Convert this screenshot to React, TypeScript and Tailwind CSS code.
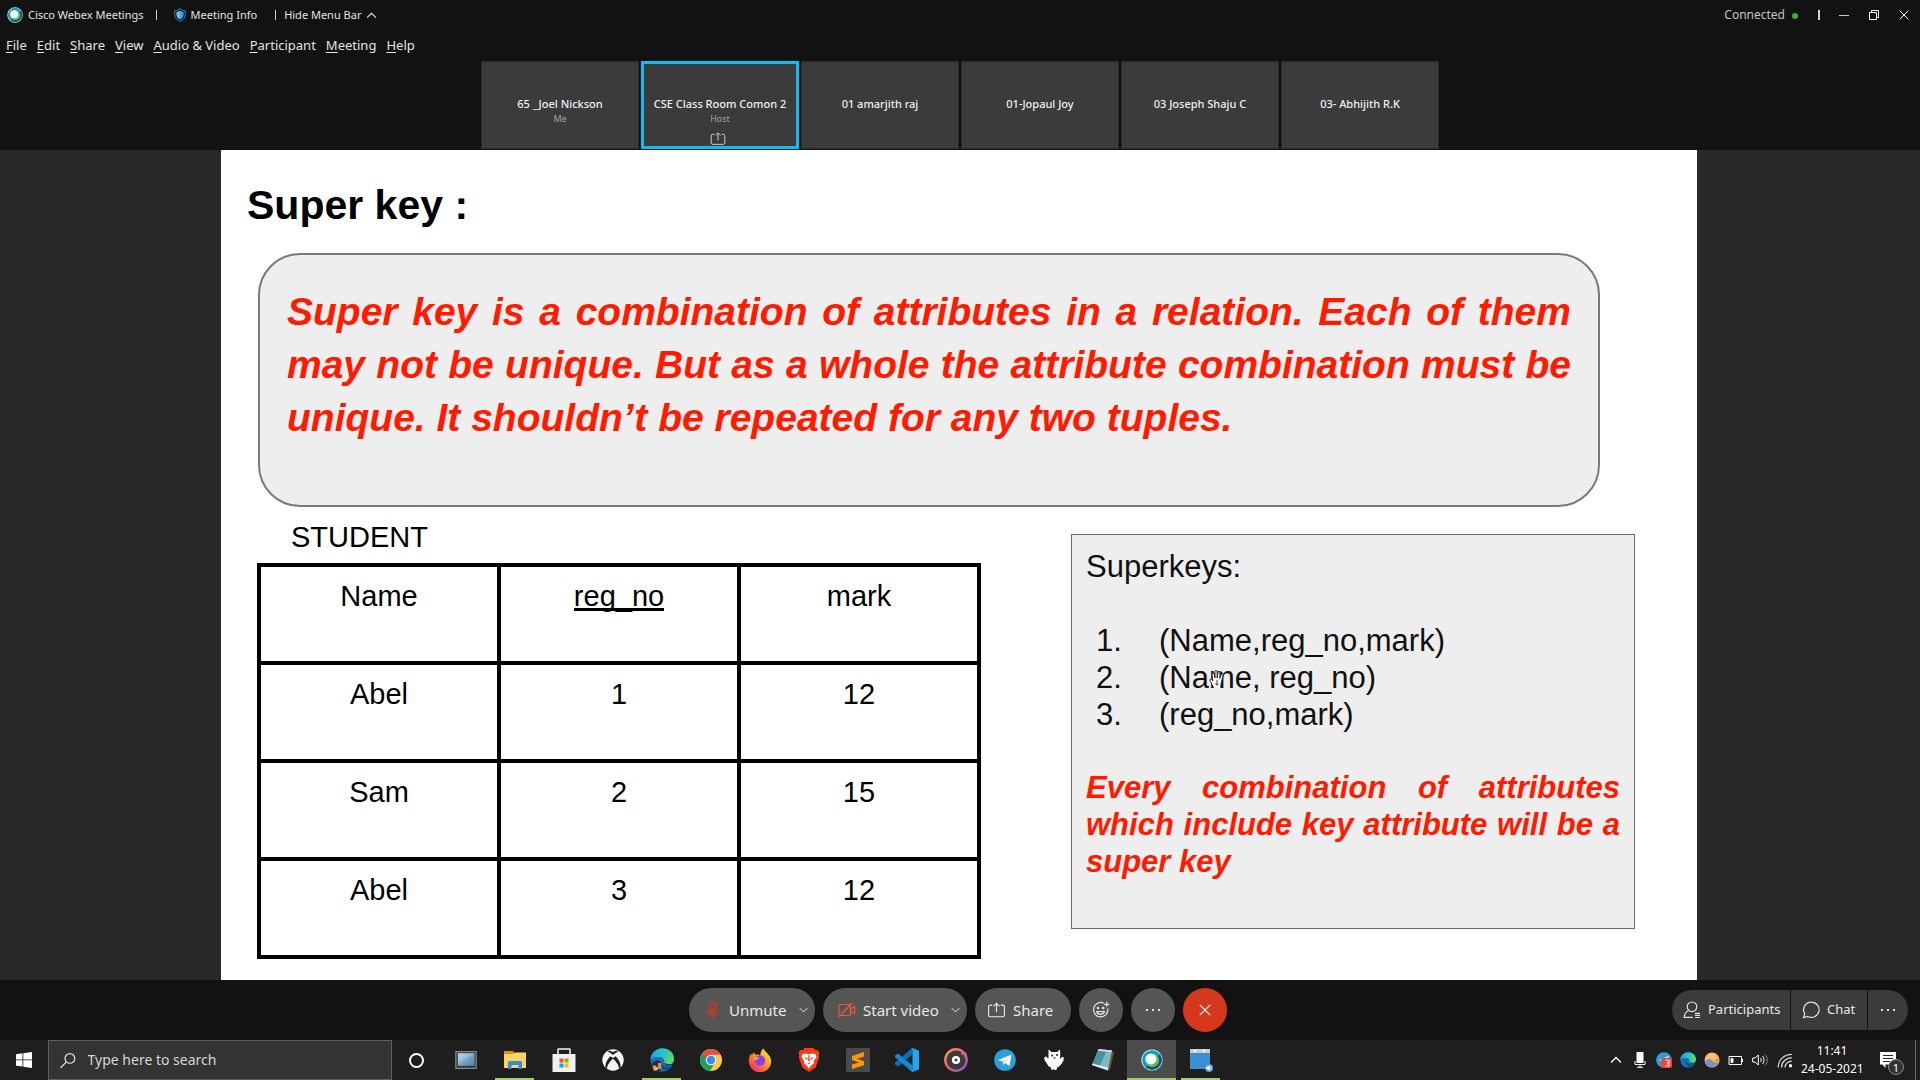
import React from "react";

const ui = "font-['Noto_Sans','Open_Sans',sans-serif]";
const slideFont = "font-['Liberation_Sans',Arial,sans-serif]";

/* ---------- icons ---------- */

function WebexLogo({ className }: { className: string }) {
  return (
    <svg viewBox="0 0 22 22" className={className} aria-hidden="true">
      <circle cx="11" cy="11" r="10.6" fill="#e8f4f8" />
      <circle cx="11" cy="11" r="9.8" fill="#00a0d6" />
      <path d="M19 5.3A9.8 9.8 0 0 1 4.5 18.3L8 16l9-9z" fill="#0b5a77" />
      <circle cx="11.2" cy="11.2" r="6.8" fill="#6cc04a" />
      <circle cx="9.9" cy="9.9" r="5.5" fill="#fff" />
    </svg>
  );
}

function ShieldIcon() {
  return (
    <svg viewBox="0 0 12 14" className="h-[14px] w-3" aria-hidden="true">
      <path d="M6 .7C7.5 2 9.3 2.6 11.3 2.8v3.6c0 3.2-2 5.7-5.3 7-3.3-1.3-5.3-3.8-5.3-7V2.8C2.7 2.6 4.5 2 6 .7z" fill="none" stroke="#2b86c9" strokeWidth="1" />
      <path d="M6 2.6C7 3.4 8.2 3.9 9.6 4v2.6c0 2.2-1.3 4-3.6 5z" fill="#3f9fe0" />
      <path d="M6 2.6C5 3.4 3.8 3.9 2.4 4v2.6c0 2.2 1.3 4 3.6 5z" fill="#6dbdf2" />
    </svg>
  );
}

function Chevron({ up, className }: { up?: boolean; className: string }) {
  return (
    <svg viewBox="0 0 12 8" className={className} fill="none" stroke="currentColor" strokeWidth="1.3" aria-hidden="true">
      <path d={up ? "M1 6.5 6 1.5l5 5" : "M1 1.5l5 5 5-5"} />
    </svg>
  );
}

function ShareIcon({ className }: { className: string }) {
  return (
    <svg viewBox="0 0 18 16" className={className} fill="none" stroke="currentColor" strokeWidth="1.2" aria-hidden="true">
      <path d="M4.5 2.8H2.6a2 2 0 0 0-2 2v8.4a2 2 0 0 0 2 2h12.800a2 2 0 0 0 2-2V4.8a2 2 0 0 0-2-2h-1.900M9 10.5V1.200M5.800 4.200 9 1l3.200 3.200" />
    </svg>
  );
}

function MutedMic() {
  return (
    <svg viewBox="0 0 14 18" className="h-[18px] w-[14px]" fill="none" stroke="#d4371c" strokeWidth="1.2" aria-hidden="true">
      <rect x="4.2" y=".8" width="5" height="10" rx="2.5" />
      <path d="M1.800 7.500v1.200a4.900 4.900 0 0 0 9.800 0V7.500M6.700 13.600v3M4 17h5.500M12.800 2 1 13.500" />
    </svg>
  );
}

function VideoOff() {
  return (
    <svg viewBox="0 0 18 16" className="h-4 w-[18px]" fill="none" stroke="#f0563d" strokeWidth="1.2" aria-hidden="true">
      <rect x="1" y="2.5" width="11.5" height="11" rx="1.5" />
      <path d="M12.500 7 16.600 4.300v7.400L12.500 9M14 1 .8 15" />
    </svg>
  );
}

function Smile() {
  return (
    <svg viewBox="0 0 18 18" className="h-[18px] w-[18px]" fill="none" stroke="#e8e8e8" strokeWidth="1.2" aria-hidden="true">
      <path d="M11.800 2.200A7.200 7.200 0 1 0 15.800 7.500M4.800 10.500c.8 3.600 6.600 3.600 7.600 0zM14.700 .8v5M12.200 3.300h5" />
      <circle cx="6" cy="7" r=".7" fill="#e8e8e8" />
      <circle cx="11.2" cy="7" r=".7" fill="#e8e8e8" />
    </svg>
  );
}

function Dots() {
  return (
    <svg viewBox="0 0 16 4" className="h-1 w-4" fill="#e0e0e0" aria-hidden="true">
      <rect x="1" y="1" width="2" height="2" />
      <rect x="7" y="1" width="2" height="2" />
      <rect x="13" y="1" width="2" height="2" />
    </svg>
  );
}

function Cross({ className }: { className: string }) {
  return (
    <svg viewBox="0 0 12 12" className={className} fill="none" stroke="#fff" strokeWidth="1.2" aria-hidden="true">
      <path d="M.8 .8l10.400 10.400M11.200 .8.8 11.200" />
    </svg>
  );
}

function PeopleIcon() {
  return (
    <svg viewBox="0 0 18 18" className="h-[18px] w-[18px]" fill="none" stroke="#e4e4e4" strokeWidth="1.2" aria-hidden="true">
      <circle cx="9" cy="5.8" r="4.8" />
      <path d="M5.500 9.500C3 10.800 1.500 13 1.200 16.400h8.500M12 12.300h5M12 14.400h5M12 16.500h5" />
    </svg>
  );
}

function ChatIcon() {
  return (
    <svg viewBox="0 0 18 18" className="h-[18px] w-[18px]" fill="none" stroke="#e4e4e4" strokeWidth="1.2" aria-hidden="true">
      <path d="M9.500 1.200a7.600 7.600 0 1 1-3.600 14.300L1.500 16.600l1.200-4A7.600 7.600 0 0 1 9.500 1.200z" />
    </svg>
  );
}

function GrabCursor() {
  return (
    <svg viewBox="0 0 16 20" className="absolute left-[50px] top-[10px] h-5 w-4" fill="#fff" stroke="#222" strokeWidth=".9" aria-hidden="true">
      <path d="M4.500 18.500 1 11.500c-.5-1.500 1-2 1.800-1l1 1.500-.8-7c0-1.600 1.700-1.600 2-.2L6 9V2.500c0-1.600 2-1.600 2.100 0V9l1-5.500c.3-1.500 2-1.200 1.900.3L10.700 9.500l1.700-4c.6-1.200 2-.6 1.700.6l-2 8.400-.6 4" />
      <path d="M8 11v5M6.500 14.500 8 16.300l1.500-1.800" fill="none" />
    </svg>
  );
}

const WindowsLogo = () => (
  <svg viewBox="0 0 16 16" className="h-4 w-4" fill="#fff" aria-hidden="true">
    <path d="M0 2.200 6.500 1.300v6.200H0zM7.300 1.200 16 0v7.500H7.300zM0 8.300h6.500v6.300L0 13.700zM7.300 8.300H16V16l-8.700-1.200z" />
  </svg>
);

const TaskView = () => (
  <svg viewBox="0 0 24 20" className="h-[18px] w-[22px]" aria-hidden="true">
    <defs>
      <linearGradient id="tv" x1="0" y1="0" x2="1" y2="1">
        <stop offset="0" stopColor="#a9cde6" />
        <stop offset="1" stopColor="#4f7fa8" />
      </linearGradient>
    </defs>
    <rect x=".7" y=".7" width="22.6" height="18.6" fill="#33373a" stroke="#85898c" strokeWidth="1.4" />
    <rect x="3" y="2.5" width="18.5" height="14" fill="url(#tv)" />
    <path d="M3 2.500h18.500L3 14z" fill="#fff" opacity=".2" />
  </svg>
);

const Explorer = () => (
  <svg viewBox="0 0 22 18" className="h-[18px] w-[22px]" aria-hidden="true">
    <path d="M0 0h9l1.500 2H22v3H0z" fill="#d9970b" />
    <path d="M0 3h9l2-1.500h11V17H0z" fill="#fbd264" />
    <path d="M4 18v-6.500q0-1.500 1.500-1.500h11q1.500 0 1.500 1.500V18h-3.500v-4h-7v4z" fill="#2f8fdc" />
  </svg>
);

const Store = () => (
  <svg viewBox="0 0 24 24" className="h-6 w-6" aria-hidden="true">
    <path d="M6 7V1.500Q6 1 6.500 1h11q.5 0 .5.500V7" fill="none" stroke="#f3f3f3" strokeWidth="1.5" />
    <path d="M.5 6h23v18H.5z" fill="#f0f0f0" />
    <path d="M7.500 10.500h4v4h-4z" fill="#f25022" />
    <path d="M12.500 10.500h4v4h-4z" fill="#7fba00" />
    <path d="M7.500 15.500h4v4h-4z" fill="#00a4ef" />
    <path d="M12.500 15.500h4v4h-4z" fill="#ffb900" />
  </svg>
);

const Xbox = () => (
  <svg viewBox="0 0 22 22" className="h-[22px] w-[22px]" aria-hidden="true">
    <circle cx="11" cy="11" r="10.7" fill="#f5f5f5" />
    <path d="M11 3.200C8.800 1.900 6.500 1.500 5.300 2.200 7.500 3 9.500 4.500 11 6c1.500-1.500 3.500-3 5.700-3.800-1.200-.7-3.500-.3-5.700 1zM8.200 7.200C5 10.800 3 14.500 3.400 18.600c.5.600 1 1 1.600 1.400C4.800 17 7.500 12.500 11 9.800 14.500 12.500 17.200 17 17 20c.6-.4 1.100-.8 1.600-1.400.4-4.100-1.600-7.800-4.800-11.400L11 9z" fill="#1e1e1e" />
  </svg>
);

function Edge({ className, id, avatar }: { className: string; id: string; avatar?: boolean }) {
  return (
    <svg viewBox="0 0 24 24" className={className} aria-hidden="true">
      <defs>
        <linearGradient id={id} x1="0" y1=".3" x2="1" y2=".6">
          <stop offset="0" stopColor="#1ea0dd" />
          <stop offset=".5" stopColor="#2bc3c9" />
          <stop offset="1" stopColor="#5fdc54" />
        </linearGradient>
      </defs>
      <circle cx="12" cy="12" r="11.5" fill="#1372c4" />
      <path d="M.5 11.500C1 4.500 6.500.3 12.200.3 19 .3 24 5 24 10.700c0 4-3 6.300-6.500 6.300-2.800 0-4-1-3.500-2 1-1.400.8-5.600-4.300-5.900C5 8.800 1.500 9.500.5 11.500z" fill={`url(#${id})`} />
      <path d="M8.500 11.500C6.500 16 9.500 22 17 22.300c2-.8 4-2.300 5.200-4.600-4.700 2.300-11.700 1.300-13.700-6.200z" fill="#0b4f9b" />
      <path d="M23.800 15.500c-2.300 2.600-9.300 2.600-9.800-.6l5 1.600z" fill="#1e1e1e" />
      {avatar && (
        <g>
          <circle cx="7" cy="18" r="5.6" fill="#3a2c28" />
          <path d="M2.500 17.500h3.500v5H3.500zM8 15h3.500v6H8z" fill="#c79469" />
          <circle cx="6" cy="20.5" r="2" fill="#e2b48d" />
        </g>
      )}
    </svg>
  );
}

const Chrome = () => (
  <svg viewBox="0 0 24 24" className="h-6 w-6" aria-hidden="true">
    <circle cx="12" cy="12" r="11" fill="#f9cb45" />
    <path d="M12 12 2.500 6.500A11 11 0 0 0 11 23l5-8.600z" fill="#1fa15d" />
    <path d="M2.400 6.600A11 11 0 0 1 21.600 6.800H12L7.500 15z" fill="#de5246" />
    <path d="M2.500 6.500 7.500 15 12 12z" fill="#1fa15d" />
    <circle cx="12" cy="12" r="5.3" fill="#f1f1f1" />
    <circle cx="12" cy="12" r="4.2" fill="#4285f4" />
  </svg>
);

const Firefox = () => (
  <svg viewBox="0 0 24 24" className="h-6 w-6" aria-hidden="true">
    <defs>
      <linearGradient id="ff" x1=".9" y1=".1" x2=".2" y2="1">
        <stop offset="0" stopColor="#ffe43a" />
        <stop offset=".45" stopColor="#ff9422" />
        <stop offset="1" stopColor="#f0266f" />
      </linearGradient>
    </defs>
    <path d="M15.500.5c.5 1.800 2 3 3.500 4.500 2.500 2.500 4.200 5 4.200 8.300A11.200 11.200 0 0 1 .8 13c0-3 1-5.800 2.400-7.700l.4 2.400C4.300 6.300 5 5 6 4.200c.2 1 .8 2 2 2.500 1.700-.4 3.200 0 4.200.6C12.500 4.500 13.500 2 15.500.5z" fill="url(#ff)" />
    <circle cx="12" cy="12.5" r="5.2" fill="#8a3ff0" />
    <path d="M5 9.500c3-1.500 5-.5 6.500 1-1.500 0-2.300.8-2.500 1.700-2 .3-3.800-.5-4-2.700z" fill="#ff9a2b" />
  </svg>
);

const Brave = () => (
  <svg viewBox="0 0 22 24" className="h-6 w-[22px]" aria-hidden="true">
    <path d="M6.500 0h9l2 2.300L20 2l1.500 3-.8 2.500.5 1.700-3.500 10.300L11 24l-6.700-4.500L.8 9.200l.5-1.700L.5 5 2 2l2.500.3z" fill="#fb3b13" />
    <path d="M4.500 6 8 5.500l3 .8 3-.8 3.500.5 1 3-2.800 4 .5 2-3.200 2.800L11 20.500l-2-2.700L5.800 15l.5-2-2.800-4z" fill="#fff" />
    <path d="M6 9l3.500 1-.5 2zM16 9l-3.500 1 .5 2zM9.500 14.500h3L11 16.500zM10.500 7h1l.4 6h-1.800z" fill="#fb3b13" />
  </svg>
);

const Sublime = () => (
  <svg viewBox="0 0 24 24" className="h-6 w-6" aria-hidden="true">
    <rect width="24" height="24" rx="1.5" fill="#4b4b4b" />
    <path d="M18 4v4.500l-7 2.300 7 2.400v4L6 21v-4.400l7-2.200-7-2.400V8z" fill="#ff9800" />
  </svg>
);

const VSCode = () => (
  <svg viewBox="0 0 24 24" className="h-6 w-6" aria-hidden="true">
    <path d="M17.500 0v6.500L3 18.500 0 16.500v-1.700L16 1z" fill="#0a6fb7" />
    <path d="M17.500 24v-6.500L3 5.500 0 7.500v1.700L16 23z" fill="#1389d2" />
    <path d="M17.500 0 24 2.800v18.400L17.500 24l-1.700-1.500q1.700.5 1.700-1.300V2.800q0-1.800-1.700-1.300z" fill="#27a3f1" />
  </svg>
);

const MusicDisc = () => (
  <svg viewBox="0 0 24 24" className="h-6 w-6" fill="none" aria-hidden="true">
    <defs>
      <linearGradient id="disc" x1="0" y1="0" x2="1" y2="1">
        <stop offset="0" stopColor="#ff9a4a" />
        <stop offset=".5" stopColor="#e0607c" />
        <stop offset="1" stopColor="#8058c8" />
      </linearGradient>
    </defs>
    <circle cx="12" cy="12" r="10.7" fill="#3b3b3b" stroke="url(#disc)" strokeWidth="2.4" />
    <path d="M17 5.500h4.500v4" stroke="#e0607c" strokeWidth="2" />
    <circle cx="12" cy="12" r="2.8" stroke="#fff" strokeWidth="2.6" />
  </svg>
);

function Telegram({ badge, className }: { badge?: boolean; className: string }) {
  return (
    <svg viewBox="0 0 22 22" className={className} aria-hidden="true">
      <circle cx="11" cy="11" r="10.8" fill="#2a9fdb" />
      <path d="M4 11 17.500 5.500 15.500 17l-4.300-3-2 2-.6-3.500z" fill="#fff" />
      <path d="M8.600 12.500 15 8l-4.800 5.500-1 2.500z" fill="#b9d6e8" />
      {badge && <rect x="7" y="8" width="15" height="14" rx="2.5" fill="#f0423e" />}
      {badge && <path d="M13 11.500h5v3.500h-3 3v4h-5" fill="none" stroke="#fff" strokeWidth="1.4" />}
    </svg>
  );
}

const Bear = () => (
  <svg viewBox="0 0 20 22" className="h-[22px] w-5" aria-hidden="true">
    <path d="M4.500.5 7.500 3h5.500l3-2.500.3 4.500-.3 5 2-2 1.800.3-.3 3.200L17.500 15l-3 3-1.500.6L12.500 21h-2l-.5-1.500-1 1.500H7.500L7 18.500l-2.500-1.200L2.500 14 .3 10.500.5 8l1.500-.5L4.500 9.500z" fill="#fff" />
    <circle cx="8" cy="6.5" r="1" fill="#222" />
    <circle cx="13" cy="6" r="1" fill="#222" />
    <path d="M9 8.500h3L10.500 10z" fill="#222" />
  </svg>
);

const Notepad = () => (
  <svg viewBox="0 0 24 24" className="h-6 w-6" aria-hidden="true">
    <path d="M19 2.500 23 4l-4 18-3-2z" fill="#6a5430" />
    <path d="M7.500 1 21 2.500 17 22.500 1 17z" fill="#7fb9c4" />
    <path d="M7.500 1 16 2 8 19.500 1 17z" fill="#4b919f" />
    <path d="M17 22.500 1 17l.5-1.500L17 19.500z" fill="#dcecef" />
    <path d="m7.500 1 13.500 1.500-.3 1.800L7 2.800z" fill="#d7dcde" />
  </svg>
);

const Player = () => (
  <svg viewBox="0 0 24 24" className="h-6 w-6" aria-hidden="true">
    <path d="M1 1h20v20H1z" fill="#3c8fd2" />
    <path d="M1 1h20v4H1z" fill="#c9ced2" />
    <circle cx="6" cy="3" r="1.2" fill="#fff" />
    <circle cx="15" cy="3" r="1.2" fill="#fff" />
    <circle cx="20" cy="20" r="4" fill="#5b9bd6" />
    <path d="M17.500 19h1.500l1.700-1.500v5L19 21h-1.500zM22 18v4" fill="#fff" stroke="#fff" strokeWidth=".6" />
  </svg>
);

/* ---------- header ---------- */

const menus = ["File", "Edit", "Share", "View", "Audio & Video", "Participant", "Meeting", "Help"];

function Header() {
  return (
    <header className="text-[#e3e3e3]">
      <div className="flex h-[30px] items-center px-[7px] text-[11px]">
        <WebexLogo className="h-4 w-4" />
        <span className="ml-[5px] whitespace-nowrap">Cisco Webex Meetings</span>
        <span className="ml-3 h-[10px] w-px bg-[#d0d0d0]" />
        <button className="ml-[17px] flex items-center gap-[5px] whitespace-nowrap">
          <ShieldIcon />
          Meeting Info
        </button>
        <span className="ml-[18px] h-[10px] w-px bg-[#d0d0d0]" />
        <button className="ml-2 flex items-center gap-[5px] whitespace-nowrap">
          Hide Menu Bar
          <Chevron up className="h-[7px] w-[11px]" />
        </button>
        <div className="ml-auto flex items-center">
          <span className="text-xs text-[#c4c4c4]">Connected</span>
          <span className="ml-[7px] mt-0.5 size-1.5 rounded-full bg-[#3fae3f]" />
          <span className="ml-5 h-[10px] w-0.5 bg-[#d4d4d4]" />
          <button aria-label="Minimize" className="ml-4 grid size-4 place-items-center">
            <span className="h-px w-[10px] bg-[#c8c8c8]" />
          </button>
          <button aria-label="Restore" className="ml-[14px] grid size-4 place-items-center">
            <svg viewBox="0 0 10 10" className="size-[10px]" fill="none" stroke="#fff" aria-hidden="true">
              <path d="M.5 2.500h7v7h-7zM2.500 2.500v-2h7v7h-2" />
            </svg>
          </button>
          <button aria-label="Close" className="ml-[14px] mr-px grid size-4 place-items-center">
            <Cross className="size-[10px]" />
          </button>
        </div>
      </div>
      <nav className="flex h-[31px] items-center gap-[10px] px-[6px] text-[13px]">
        {menus.map((m) => (
          <button key={m} className="whitespace-nowrap">
            <span className="underline underline-offset-2">{m[0]}</span>
            {m.slice(1)}
          </button>
        ))}
      </nav>
    </header>
  );
}

const people = [
  { name: "65 _Joel Nickson", role: "Me" },
  { name: "CSE Class Room Comon 2", role: "Host", active: true },
  { name: "01 amarjith raj" },
  { name: "01-Jopaul Joy" },
  { name: "03 Joseph Shaju C" },
  { name: "03- Abhijith R.K" },
];

function Filmstrip() {
  return (
    <ul className="flex justify-center gap-0.5 pb-px">
      {people.map((p) => (
        <li
          key={p.name}
          className={
            p.active
              ? "flex h-[88px] w-[158px] flex-col items-center border-[3px] border-[#0cbcf4] bg-[#3b3b3b] pt-[32px]"
              : "flex h-[88px] w-[158px] flex-col items-center border border-[#2a2a2a] bg-[#3b3b3b] pt-[34px]"
          }
        >
          <span className="whitespace-nowrap text-[11px] leading-4 font-medium text-[#f0f0f0]">{p.name}</span>
          {p.role && <span className="text-[9px] leading-[14px] text-[#a2a2a2]">{p.role}</span>}
          {p.active && <ShareIcon className="mt-1.5 mr-1 h-[13px] w-4 text-[#d0d0d0]" />}
        </li>
      ))}
    </ul>
  );
}

/* ---------- slide ---------- */

const students = [
  ["Abel", "1", "12"],
  ["Sam", "2", "15"],
  ["Abel", "3", "12"],
];

const keys = ["(Name,reg_no,mark)", "(Name, reg_no)", "(reg_no,mark)"];

const cell = "h-[98px] w-1/3 border-4 border-black pt-3 align-top font-normal";

function Slide() {
  return (
    <article className={`w-full max-w-[1476px] bg-white pt-8 text-black ${slideFont}`}>
      <h1 className="pl-[26px] text-[41px] leading-[46px] font-bold">Super key :</h1>
      <p className="mr-[97px] ml-[37px] mt-[25px] rounded-[42px] border-2 border-[#7a7a7a] bg-[#eeeeee] px-[27px] pt-[30px] pb-[61px] text-justify text-[39px] leading-[53px] font-bold italic text-[#ff1a00]">
        Super key is a combination of attributes in a relation. Each of them may not be unique. But as a whole the
        attribute combination must be unique. It shouldn’t be repeated for any two tuples.
      </p>
      <div className="grid grid-cols-[724fr_564fr] items-start gap-[90px] pr-[62px] pl-9">
        <table className="mt-[13px] w-full border-collapse text-center text-[29px] leading-[34px]">
          <caption className="pb-[9px] pl-[34px] text-left">STUDENT</caption>
          <thead>
            <tr>
              <th className={cell}>Name</th>
              <th className={cell}>
                <span className="inline-block h-8 border-b-[3px] border-black">reg_no</span>
              </th>
              <th className={cell}>mark</th>
            </tr>
          </thead>
          <tbody>
            {students.map((row, i) => (
              <tr key={i}>
                {row.map((v, j) => (
                  <td key={j} className={cell}>
                    {v}
                  </td>
                ))}
              </tr>
            ))}
          </tbody>
        </table>
        <section className="mt-[27px] border border-[#6b6b6b] bg-[#eeeeee] px-[14px] pt-[13px] pb-12 text-[31px] leading-[37px] text-[#111]">
          <h2>Superkeys:</h2>
          <ol className="mt-[37px] mb-9">
            {keys.map((k, i) => (
              <li key={k} className="flex">
                <span className="w-[73px] pl-[10px]">{i + 1}.</span>
                <span className="relative">
                  {k}
                  {i === 1 && <GrabCursor />}
                </span>
              </li>
            ))}
          </ol>
          <p className="text-justify font-bold italic text-[#ff1a00]">
            Every combination of attributes which include key attribute will be a super key
          </p>
        </section>
      </div>
    </article>
  );
}

/* ---------- meeting controls ---------- */

const pill = "flex h-11 items-center rounded-full bg-[#555555]";
const round = "grid size-11 place-items-center rounded-full";

function Controls() {
  return (
    <footer className="grid h-[60px] grid-cols-[1fr_auto_1fr] items-center pr-3 pl-2 text-[15px] text-[#e8e8e8]">
      <span />
      <div className="flex gap-2">
        <div className={`${pill} w-[126px] pl-[17px]`}>
          <button className="flex items-center gap-[9px]">
            <MutedMic />
            Unmute
          </button>
          <button aria-label="Audio options" className="mr-[7px] ml-auto">
            <Chevron className="h-[6px] w-[9px]" />
          </button>
        </div>
        <div className={`${pill} w-[144px] pl-[15px]`}>
          <button className="flex items-center gap-[7px] whitespace-nowrap">
            <VideoOff />
            Start video
          </button>
          <button aria-label="Video options" className="mr-[7px] ml-auto">
            <Chevron className="h-[6px] w-[9px]" />
          </button>
        </div>
        <button className={`${pill} w-24 gap-2 pl-[13px]`}>
          <ShareIcon className="h-4 w-[17px]" />
          Share
        </button>
        <button aria-label="Reactions" className={`${round} bg-[#555555]`}>
          <Smile />
        </button>
        <button aria-label="More options" className={`${round} bg-[#555555]`}>
          <Dots />
        </button>
        <button aria-label="Leave meeting" className={`${round} bg-[#d5371c]`}>
          <Cross className="size-3" />
        </button>
      </div>
      <div className="flex h-10 gap-px justify-self-end overflow-hidden rounded-full text-[13px]">
        <button className="flex w-[118px] items-center gap-[7px] bg-[#3b3b3b] pl-[11px]">
          <PeopleIcon />
          Participants
        </button>
        <button className="flex w-[76px] items-center gap-[7px] bg-[#3b3b3b] pl-[11px]">
          <ChatIcon />
          Chat
        </button>
        <button aria-label="More panels" className="grid w-10 place-items-center bg-[#3b3b3b]">
          <Dots />
        </button>
      </div>
    </footer>
  );
}

/* ---------- taskbar ---------- */

const apps: { label: string; icon: React.ReactNode; open?: boolean; focused?: boolean }[] = [
  { label: "Cortana", icon: <span className="size-[15px] rounded-full border-2 border-white" /> },
  { label: "Desktop", icon: <TaskView /> },
  { label: "File Explorer", icon: <Explorer />, open: true },
  { label: "Microsoft Store", icon: <Store /> },
  { label: "Xbox", icon: <Xbox /> },
  { label: "Microsoft Edge", icon: <Edge className="size-6" id="edge-a" avatar />, open: true },
  { label: "Chrome", icon: <Chrome /> },
  { label: "Firefox", icon: <Firefox /> },
  { label: "Brave", icon: <Brave /> },
  { label: "Sublime Text", icon: <Sublime /> },
  { label: "Visual Studio Code", icon: <VSCode /> },
  { label: "Music", icon: <MusicDisc /> },
  { label: "Telegram", icon: <Telegram className="size-[22px]" /> },
  { label: "Bear", icon: <Bear /> },
  { label: "Notepad", icon: <Notepad /> },
  { label: "Webex", icon: <WebexLogo className="size-[22px]" />, open: true, focused: true },
  { label: "Player", icon: <Player />, open: true },
];

function Taskbar() {
  return (
    <footer className="flex h-10 bg-[#1e1e1e] text-white">
      <button aria-label="Start" className="grid w-12 place-items-center">
        <WindowsLogo />
      </button>
      <label className="flex w-[344px] items-center border border-[#5e5e5e] bg-[#333333] pl-[11px]">
        <svg viewBox="0 0 17 17" className="size-[17px]" fill="none" stroke="#e6e6e6" strokeWidth="1.3" aria-hidden="true">
          <circle cx="10.8" cy="6.2" r="5.3" />
          <path d="M7 10 .6 16.400" />
        </svg>
        <input
          aria-label="Search"
          placeholder="Type here to search"
          className="ml-3 w-full bg-transparent text-sm outline-none placeholder:text-[#d6d6d6]"
        />
      </label>
      <div className="flex">
        {apps.map((a) => (
          <button
            key={a.label}
            aria-label={a.label}
            className={a.focused ? "relative grid w-[49px] place-items-center bg-[#4c4c4c]" : "relative grid w-[49px] place-items-center"}
          >
            {a.icon}
            {a.open && (
              <span
                className={
                  a.focused
                    ? "absolute inset-x-0 bottom-0 h-0.5 bg-[#a3cf62]"
                    : "absolute inset-x-[5px] bottom-0 h-0.5 bg-[#a3cf62]"
                }
              />
            )}
          </button>
        ))}
      </div>
      <div className="ml-auto flex items-center gap-2 pr-1 *:shrink-0">
        <span className="grid w-4 place-items-center">
          <Chevron up className="h-2 w-3" />
        </span>
        <svg viewBox="0 0 16 16" className="size-4" aria-hidden="true">
          <rect x="4.5" y="0" width="7" height="11" rx="1" fill="#fff" />
          <path d="M3 9v3.500h10V9M8 12.500V15M5 15.300h6" fill="none" stroke="#fff" />
        </svg>
        <Telegram badge className="size-4" />
        <Edge className="size-4" id="edge-b" />
        <svg viewBox="0 0 16 16" className="size-4" aria-hidden="true">
          <circle cx="8" cy="8" r="7.5" fill="#f6bf6c" />
          <path d="M.8 10.500C2 6.500 6 6 8 8.500c1.500 1.500 4 3 6.800 2.500A7.500 7.500 0 0 1 .8 10.500z" fill="#7c90c4" />
          <path d="M9.500 8.500 14 6l1.400 3-1.500 2z" fill="#ee9630" />
        </svg>
        <svg viewBox="0 0 16 16" className="size-4" fill="none" stroke="#fff" aria-hidden="true">
          <path d="M1 4.500h12.500v8H1zM14.500 7v3" />
          <path d="M3 6.500h2v4H3z" fill="#fff" />
        </svg>
        <svg viewBox="0 0 17 16" className="h-4 w-[17px]" fill="none" stroke="#fff" aria-hidden="true">
          <path d="M.7 6v4H3l3.300 3V3L3 6zM8.500 6c1 1.200 1 2.800 0 4M10.500 4c2 2.300 2 5.700 0 8" />
          <path d="M13 2.500c3 3 3 8 0 11" stroke="#8a8a8a" />
        </svg>
        <svg viewBox="0 0 14 14" className="size-4" fill="none" stroke="#d8d8d8" strokeWidth="1.1" aria-hidden="true">
          <path d="M1 13.500C1 6.500 6.500 2 13 2M4 13.500C4 8.500 8 5 13 5M7 13.500C7 10.300 9.500 8 13 8" />
          <circle cx="11.8" cy="12" r="1.5" fill="#fff" stroke="none" />
        </svg>
        <time className="w-[62px] text-center text-xs leading-[18px] whitespace-nowrap">
          11:41
          <br />
          24-05-2021
        </time>
        <button aria-label="1 new notification" className="relative ml-[9px] h-10 w-[27px]">
          <svg viewBox="0 0 16 16" className="absolute top-3 left-0 size-4" aria-hidden="true">
            <path d="M0 0h16v12.500H5.500V16L2.500 12.500H0z" fill="#fff" />
            <path d="M3 3.500h10M3 6.500h10M3 9.500h7" stroke="#222" strokeWidth="1.1" />
          </svg>
          <span className="absolute top-[19px] left-2 grid size-4 place-items-center rounded-full border border-[#8c8c8c] bg-[#333] text-[11px] leading-none">
            1
          </span>
        </button>
        <span className="h-10 w-px bg-[#6a6a6a]" />
      </div>
    </footer>
  );
}

export default function App() {
  return (
    <div className={`flex min-h-screen flex-col bg-[#121212] ${ui}`}>
      <Header />
      <Filmstrip />
      <main className="flex flex-1 justify-center bg-[#292929] pr-0.5">
        <Slide />
      </main>
      <Controls />
      <Taskbar />
    </div>
  );
}
